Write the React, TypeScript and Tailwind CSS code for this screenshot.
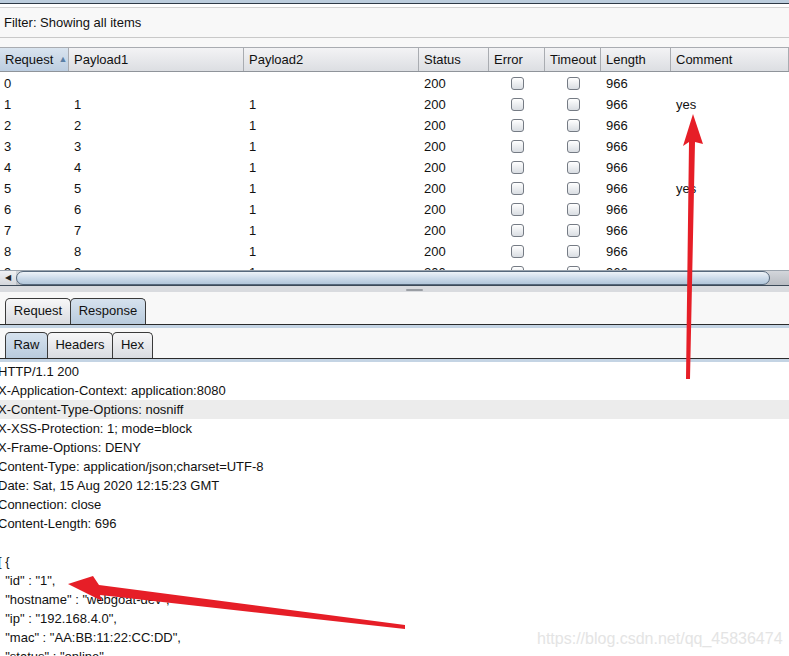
import React from "react";

const font = { fontFamily: '"Liberation Sans", Arial, sans-serif' };

const rows = [
  ["0", "", "", "200", "966", ""],
  ["1", "1", "1", "200", "966", "yes"],
  ["2", "2", "1", "200", "966", ""],
  ["3", "3", "1", "200", "966", ""],
  ["4", "4", "1", "200", "966", ""],
  ["5", "5", "1", "200", "966", "yes"],
  ["6", "6", "1", "200", "966", ""],
  ["7", "7", "1", "200", "966", ""],
  ["8", "8", "1", "200", "966", ""],
  ["9", "9", "1", "200", "966", ""],
];

const response = [
  "HTTP/1.1 200",
  "X-Application-Context: application:8080",
  "X-Content-Type-Options: nosniff",
  "X-XSS-Protection: 1; mode=block",
  "X-Frame-Options: DENY",
  "Content-Type: application/json;charset=UTF-8",
  "Date: Sat, 15 Aug 2020 12:15:23 GMT",
  "Connection: close",
  "Content-Length: 696",
  "",
  "[ {",
  '  "id" : "1",',
  '  "hostname" : "webgoat-dev",',
  '  "ip" : "192.168.4.0",',
  '  "mac" : "AA:BB:11:22:CC:DD",',
  '  "status" : "online",',
];

function Check() {
  return (
    <span className="inline-block w-[13px] h-[13px] rounded-[3px] border border-[#757b84] bg-gradient-to-b from-white to-[#d9dde2]" />
  );
}

function Tab({ label, active, w }: { label: string; active?: boolean; w: string }) {
  return (
    <div
      className={`${w} h-[26px] -mr-px flex items-center justify-center pb-[1px] rounded-t-[5px] border border-b-0 border-[#3a3a3a] text-[13px] text-[#111] ${
        active
          ? "bg-gradient-to-b from-[#d6e2ee] to-[#b9cbdd]"
          : "bg-gradient-to-b from-[#f7f7f8] to-[#d9dbe0]"
      }`}
    >
      {label}
    </div>
  );
}

export default function App() {
  const grid =
    "grid grid-cols-[69px_175px_175px_70px_56px_56px_70px_1fr]";
  return (
    <div
      className="relative w-[789px] h-[656px] overflow-hidden bg-[#f8f8f8] text-[#111]"
      style={font}
    >
      {/* top strip */}
      <div className="h-[3px] bg-[#bccddd]" />
      <div className="h-px bg-[#2e3a46]" />
      <div className="h-[3px] bg-white" />
      <div className="h-px bg-[#d2d2d2]" />
      <div className="h-[29px] flex items-center pl-[4px] text-[13px]">
        Filter: Showing all items
      </div>
      <div className="h-px bg-[#c9c9c9]" />
      <div className="h-[9px]" />
      <div className="h-px bg-[#a9acb1]" />

      {/* table header */}
      <div className={`${grid} h-[23px] text-[13px]`}>
        {["Request", "Payload1", "Payload2", "Status", "Error", "Timeout", "Length", "Comment"].map(
          (h, i) => (
            <div
              key={h}
              className={`flex items-center pl-[5px] border-r border-[#a9acb1] ${
                i === 0
                  ? "bg-gradient-to-b from-[#d9e4ef] to-[#bccde0] pl-[4px]"
                  : "bg-gradient-to-b from-[#f3f3f5] to-[#dcdee2]"
              }`}
            >
              {h}
              {i === 0 && <span className="ml-[5px] text-[9px] text-[#5b7fa5]">▲</span>}
            </div>
          )
        )}
      </div>
      <div className="h-px bg-[#8f949a]" />

      {/* table body */}
      <div className="h-[198px] overflow-hidden bg-white text-[13px]">
        {rows.map((r) => (
          <div key={r[0]} className={`${grid} h-[21px] items-center`}>
            <div className="pl-[4px] pt-[2px]">{r[0]}</div>
            <div className="pl-[5px] pt-[2px]">{r[1]}</div>
            <div className="pl-[5px] pt-[2px]">{r[2]}</div>
            <div className="pl-[5px] pt-[2px]">{r[3]}</div>
            <div className="flex justify-center pt-[1px]">
              <Check />
            </div>
            <div className="flex justify-center pt-[1px]">
              <Check />
            </div>
            <div className="pl-[5px] pt-[2px]">{r[4]}</div>
            <div className="pl-[5px] pt-[2px]">{r[5]}</div>
          </div>
        ))}
      </div>

      {/* horizontal scrollbar */}
      <div className="h-[15px] flex border-t border-[#9aa3ad] bg-gradient-to-b from-[#d3d6db] to-[#b9bdc3]">
        <div className="w-[16px] flex items-center justify-center bg-gradient-to-b from-[#f0f1f3] to-[#d4d7dc]">
          <span className="text-[8px] text-[#222]">◀</span>
        </div>
        <div className="w-[754px] rounded-[8px] border border-[#56687c] bg-gradient-to-b from-[#eef3f8] via-[#cddbea] to-[#b2c6da]" />
      </div>
      <div className="h-px bg-[#3c4a58]" />

      {/* splitter */}
      <div className="h-[6px] bg-[#d9dbdf] relative">
        <div className="absolute left-[406px] top-[3px] w-[17px] h-[2px] rounded bg-[#9a9ea4]" />
      </div>
      <div className="h-[6px]" />

      {/* request / response tabs */}
      <div className="flex pl-[5px] h-[26px]">
        <Tab label="Request" w="w-[66px]" />
        <Tab label="Response" w="w-[76px]" active />
      </div>
      <div className="h-px bg-[#2b2b2b]" />
      <div className="h-[3px] bg-[#c4d4e4]" />
      <div className="h-[4px]" />

      {/* raw / headers / hex */}
      <div className="flex pl-[5px] h-[26px]">
        <Tab label="Raw" w="w-[43px]" active />
        <Tab label="Headers" w="w-[66px]" />
        <Tab label="Hex" w="w-[41px]" />
      </div>
      <div className="h-px bg-[#2b2b2b]" />
      <div className="h-[3px] bg-[#c4d4e4]" />

      {/* response body */}
      <div className="bg-white h-[400px] text-[13px] leading-[19px]">
        {response.map((l, i) => (
          <div
            key={i}
            className={`h-[19px] -ml-[2px] whitespace-pre ${i === 2 ? "bg-[#ececec]" : ""}`}
          >
            {l}
          </div>
        ))}
      </div>

      {/* annotations */}
      <svg
        className="absolute inset-0 pointer-events-none"
        width="789"
        height="656"
        viewBox="0 0 789 656"
      >
        <polygon
          points="693,114 703,144 695,142 690,379 686,379 689,142 683,146"
          fill="#e61e27"
        />
        <polygon
          points="68,584 93,576 99,585 405,625 405,629 100,595 102,601"
          fill="#e61e27"
        />
      </svg>
      <div className="absolute left-[537px] top-[627px] text-[16px] text-[#e4e4e4]">
        https://blog.csdn.net/qq_45836474
      </div>
    </div>
  );
}
